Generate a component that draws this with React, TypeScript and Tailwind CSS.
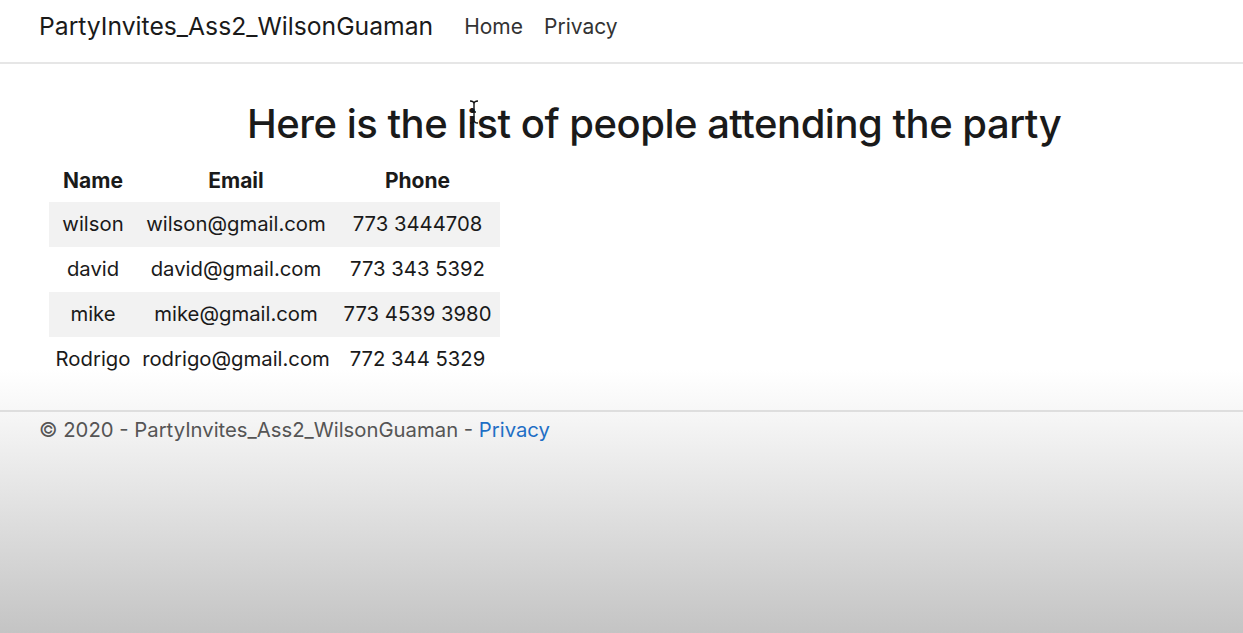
import React from "react";

const rows = [
  { name: "wilson", email: "wilson@gmail.com", phone: "773 3444708" },
  { name: "david", email: "david@gmail.com", phone: "773 343 5392" },
  { name: "mike", email: "mike@gmail.com", phone: "773 4539 3980" },
  { name: "Rodrigo", email: "rodrigo@gmail.com", phone: "772 344 5329" },
];

export default function App() {
  return (
    <div
      className="relative w-[1243px] h-[633px] overflow-hidden text-[#212529] bg-[linear-gradient(to_bottom,#ffffff_0px,#ffffff_370px,#f5f5f5_420px,#c4c4c4_633px)]"
      style={{ fontFamily: 'Inter, "Liberation Sans", Arial, sans-serif' }}
    >
      <header className="h-[64px] border-b-2 border-[#e6e6e6] flex items-center pl-[39px] pb-[8px] bg-white">
        <span className="text-[24.7px] text-[#1a1a1a]">PartyInvites_Ass2_WilsonGuaman</span>
        <nav className="flex items-center ml-[31px] gap-[21px] text-[21px] text-[#333]">
          <span>Home</span>
          <span>Privacy</span>
        </nav>
      </header>

      <main className="h-[346px] pl-[49px]">
        <h1 className="pl-[198px] pt-[36px] h-[96px] text-[40px] font-medium text-[#1a1a1a] tracking-[-0.5px] leading-[48px]">
          Here is the list of people attending the party
        </h1>
        <table className="border-collapse text-[20.3px] text-[#1a1a1a]">
          <thead>
            <tr className="h-[42px]">
              <th className="w-[88px] text-center font-bold px-[4px] text-[21px]">Name</th>
              <th className="w-[198px] text-center font-bold px-[4px] text-[21px]">Email</th>
              <th className="w-[165px] text-center font-bold px-[4px] text-[21px]">Phone</th>
            </tr>
          </thead>
          <tbody>
            {rows.map((r, i) => (
              <tr key={r.name} className={i % 2 === 0 ? "h-[45px] bg-[#f2f2f2]" : "h-[45px]"}>
                <td className="text-center px-[4px] whitespace-nowrap">{r.name}</td>
                <td className="text-center px-[4px] whitespace-nowrap">{r.email}</td>
                <td className="text-center px-[4px] whitespace-nowrap">{r.phone}</td>
              </tr>
            ))}
          </tbody>
        </table>
      </main>

      <footer className="border-t-2 border-[#dedede] pl-[39px] pt-[3px] text-[20.3px] text-[#555]">
        © 2020 - PartyInvites_Ass2_WilsonGuaman - <span className="text-[#1f6fc5]">Privacy</span>
      </footer>

      <svg className="absolute left-[469px] top-[100px]" width="10" height="24" viewBox="0 0 10 24">
        <path d="M1 1 Q5 1 5 4 L5 20 Q5 23 1 23 M9 1 Q5 1 5 4 M5 20 Q5 23 9 23 M3 12 L7 12" stroke="#111" strokeWidth="1.4" fill="none" />
      </svg>
    </div>
  );
}
